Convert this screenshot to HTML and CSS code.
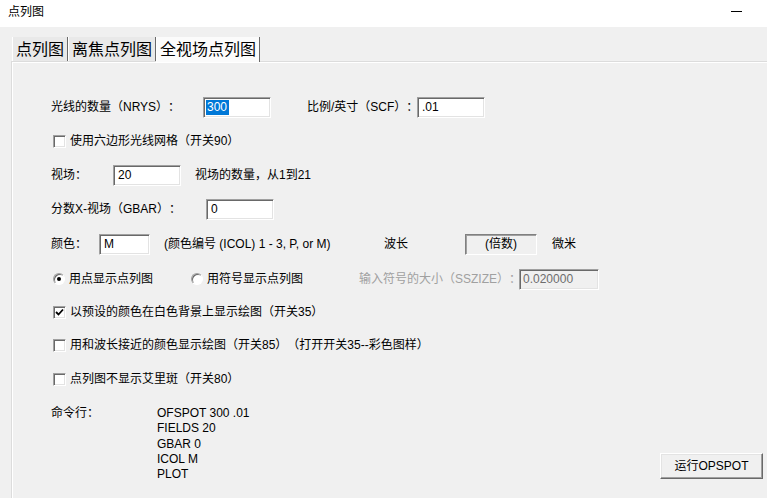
FILE: index.html
```html
<!DOCTYPE html>
<html>
<head>
<meta charset="utf-8">
<link rel="stylesheet" href="styles.css">
</head>
<body>
<div class="window">
  <div class="titlebar">
    <span class="title">点列图</span>
    <span class="min"></span>
  </div>
  <div class="client">
    <div class="tabs">
      <div class="tab">点列图</div>
      <div class="tab">离焦点列图</div>
      <div class="tab active">全视场点列图</div>
    </div>
    <div class="panel">
      <div class="row">
        <span class="lbl w152">光线的数量（NRYS）：</span>
        <span class="edit w68"><span class="sel">300</span></span>
        <span class="lbl ml36 w110">比例/英寸（SCF）：</span>
        <span class="edit w68">.01</span>
      </div>
      <div class="row">
        <span class="check"></span>
        <span class="lbl">使用六边形光线网格（开关90）</span>
      </div>
      <div class="row">
        <span class="lbl w62">视场：</span>
        <span class="edit w68">20</span>
        <span class="lbl ml14">视场的数量，从1到21</span>
      </div>
      <div class="row">
        <span class="lbl w155">分数X-视场（GBAR）：</span>
        <span class="edit w68">0</span>
      </div>
      <div class="row tall">
        <span class="lbl w48">颜色：</span>
        <span class="edit w51">M</span>
        <span class="lbl ml14 w220">(颜色编号 (ICOL) 1 - 3, P, or M)</span>
        <span class="lbl w81">波长</span>
        <span class="static">(倍数)</span>
        <span class="lbl ml15">微米</span>
      </div>
      <div class="row">
        <span class="radio-group w138"><span class="radio on"></span><span class="lbl">用点显示点列图</span></span>
        <span class="radio-group w170"><span class="radio"></span><span class="lbl">用符号显示点列图</span></span>
        <span class="lbl disabled w160">输入符号的大小（SSZIZE）：</span>
        <span class="edit off w80">0.020000</span>
      </div>
      <div class="row short">
        <span class="check on"><svg width="9" height="9" viewBox="0 0 9 9"><path d="M1 4 L3.5 6.5 L8 1.5" fill="none" stroke="#000" stroke-width="1.8"/></svg></span>
        <span class="lbl">以预设的颜色在白色背景上显示绘图（开关35）</span>
      </div>
      <div class="row">
        <span class="check"></span>
        <span class="lbl">用和波长接近的颜色显示绘图（开关85）（打开开关35--彩色图样）</span>
      </div>
      <div class="row">
        <span class="check"></span>
        <span class="lbl">点列图不显示艾里斑（开关80）</span>
      </div>
      <div class="cmd">
        <span class="lbl w106 cmdlbl">命令行：</span>
        <div class="lines">
          <div>OFSPOT 300 .01</div>
          <div>FIELDS 20</div>
          <div>GBAR 0</div>
          <div>ICOL M</div>
          <div>PLOT</div>
        </div>
        <div class="button">运行OPSPOT</div>
      </div>
    </div>
  </div>
</div>
</body>
</html>
```
FILE: styles.css
```css
html, body {
  margin: 0;
  padding: 0;
  width: 767px;
  height: 498px;
  overflow: hidden;
  background: #f0f0f0;
}
body {
  font-family: "Liberation Sans", "Noto Sans CJK SC", sans-serif;
  font-size: 12px;
  color: #000;
  text-spacing-trim: space-all;
}
.window {
  width: 767px;
  height: 498px;
  display: flex;
  flex-direction: column;
}
.titlebar {
  height: 27px;
  background: #fff;
  display: flex;
  align-items: center;
  padding-left: 8px;
  box-sizing: border-box;
  flex-shrink: 0;
}
.title {
  font-size: 12px;
  line-height: 14px;
  margin-top: -3px;
}
.min {
  margin-left: auto;
  margin-right: 25px;
  width: 11px;
  height: 1px;
  background: #000;
  margin-top: -5px;
}
.client {
  flex: 1;
  background: #f0f0f0;
  padding: 10px 0 0 12px;
  display: flex;
  flex-direction: column;
  min-height: 0;
}
.tabs {
  display: flex;
  height: 24px;
  flex-shrink: 0;
}
.tab {
  font-size: 16px;
  line-height: 22px;
  padding: 1px 3px 0 3px;
  border-left: 1px solid #fff;
  border-right: 1px solid #6a6a6a;
  background: #e9e9e9;
  height: 24px;
  box-sizing: border-box;
  display: flex;
  align-items: center;
}
.tab.active {
  background: #fbfbfb;
  border-left: 1px solid #fff;
  height: 25px;
  position: relative;
  z-index: 1;
}
.panel {
  flex: 1;
  margin-left: -1px;
  border-top: 1px solid #dcdcdc;
  border-left: 1px solid #dcdcdc;
  box-shadow: inset 1px 1px 0 #fff;
  padding: 28px 4px 0 39px;
  display: flex;
  flex-direction: column;
  min-height: 0;
}
.row {
  display: flex;
  align-items: center;
  height: 34px;
  flex-shrink: 0;
  white-space: nowrap;
}
.row.tall { height: 36px; }
.row.short { height: 32px; }
.lbl {
  line-height: 16px;
  flex-shrink: 0;
}
.w48 { width: 48px; }
.w62 { width: 62px; }
.w81 { width: 81px; }
.w106 { width: 106px; }
.w110 { width: 110px; }
.w138 { width: 138px; }
.w152 { width: 152px; }
.w155 { width: 155px; }
.w160 { width: 160px; }
.w170 { width: 170px; }
.w220 { width: 220px; }
.ml14 { margin-left: 14px; }
.ml15 { margin-left: 15px; }
.ml36 { margin-left: 36px; }
.edit {
  height: 21px;
  box-sizing: border-box;
  background: #fff;
  border-top: 1px solid #a0a0a0;
  border-left: 1px solid #a0a0a0;
  border-bottom: 1px solid #fff;
  border-right: 1px solid #fff;
  box-shadow: inset 1px 1px 0 #696969, inset -1px -1px 0 #e3e3e3;
  padding-left: 4px;
  line-height: 19px;
  flex-shrink: 0;
}
.edit.w68 { width: 68px; }
.edit.w51 { width: 51px; }
.edit.w80 { width: 80px; }
.edit.off {
  background: #f0f0f0;
  color: #6d6d6d;
  padding-left: 3px;
}
.sel {
  background: #0078d7;
  color: #fff;
  display: inline-block;
  line-height: 15px;
  padding: 0 2px 0 1px;
  margin-left: -2px;
}
.static {
  width: 72px;
  height: 21px;
  box-sizing: border-box;
  border-top: 1px solid #808080;
  border-left: 1px solid #808080;
  border-bottom: 1px solid #fff;
  border-right: 1px solid #fff;
  box-shadow: inset 1px 1px 0 #a0a0a0;
  text-align: center;
  line-height: 19px;
  flex-shrink: 0;
}
.disabled { color: #a0a0a0; }
.check {
  width: 13px;
  height: 13px;
  box-sizing: border-box;
  margin-left: 2px;
  margin-right: 4px;
  background: #fff;
  border-top: 1px solid #a0a0a0;
  border-left: 1px solid #a0a0a0;
  border-bottom: 1px solid #fff;
  border-right: 1px solid #fff;
  box-shadow: inset 1px 1px 0 #696969, inset -1px -1px 0 #e3e3e3;
  display: flex;
  align-items: center;
  justify-content: center;
  flex-shrink: 0;
}
.radio-group {
  display: flex;
  align-items: center;
  flex-shrink: 0;
}
.radio {
  width: 12px;
  height: 12px;
  box-sizing: border-box;
  margin-left: 2px;
  margin-right: 4px;
  border-radius: 50%;
  background: #fff;
  border-top: 1px solid #a0a0a0;
  border-left: 1px solid #a0a0a0;
  border-bottom: 1px solid #fff;
  border-right: 1px solid #fff;
  box-shadow: inset 1px 1px 0 #696969;
  display: flex;
  align-items: center;
  justify-content: center;
}
.radio.on::after {
  content: "";
  width: 4px;
  height: 4px;
  border-radius: 50%;
  background: #000;
}
.cmd {
  display: flex;
  margin-top: 10px;
  align-items: flex-start;
  flex-shrink: 0;
}
.cmdlbl { line-height: 15.25px; }
.lines {
  line-height: 15.25px;
  white-space: nowrap;
}
.button {
  margin-left: auto;
  align-self: flex-end;
  margin-bottom: 3px;
  width: 103px;
  height: 26px;
  box-sizing: border-box;
  background: #f0f0f0;
  border-top: 1px solid #fff;
  border-left: 1px solid #fff;
  border-bottom: 1px solid #696969;
  border-right: 1px solid #696969;
  box-shadow: inset -1px -1px 0 #a0a0a0, inset 1px 1px 0 #e3e3e3;
  display: flex;
  align-items: center;
  justify-content: center;
  line-height: 16px;
}
```
